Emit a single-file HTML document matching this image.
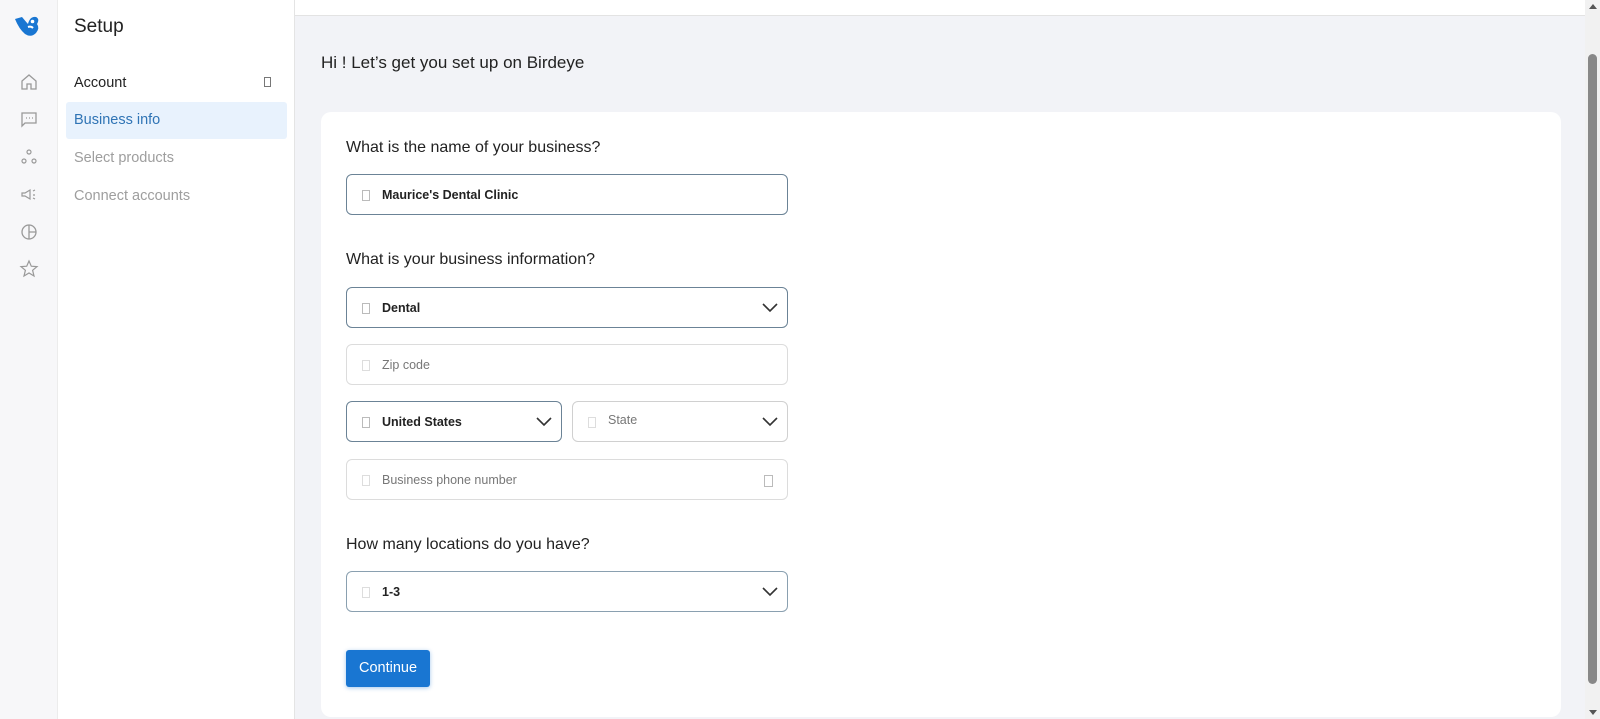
<!DOCTYPE html>
<html style="overflow:hidden;height:719px"><head><meta charset="utf-8"><style>
*{box-sizing:border-box;margin:0;padding:0}
body{width:1600px;height:719px;overflow:hidden;background:#f2f3f7;font-family:"Liberation Sans",Arial,sans-serif;position:relative;color:#212121}
.rail{position:absolute;left:0;top:0;width:58px;height:719px;background:#f7f7f9;border-right:1px solid #ececec}
.side{position:absolute;left:58px;top:0;width:237px;height:719px;background:#fff;border-right:1px solid #e4e4e4}
.top{position:absolute;left:295px;top:0;width:1290px;height:16px;background:#fff;border-bottom:1px solid #e3e3e3}
.ic{position:absolute;left:19px;width:20px;height:20px}
.abs{position:absolute}
.card{position:absolute;left:321px;top:112px;width:1240px;height:605px;background:#fff;border-radius:10px}
.q{position:absolute;left:346px;font-size:16px;color:#222}
.inp{position:absolute;height:41px;border:1px solid #6b8396;border-radius:6px;background:#fff;font-size:12.5px;font-weight:bold;color:#222}
.inp.ph{border-color:#dcdcdc;font-weight:normal;color:#777}
.inp .b{position:absolute;left:15px;top:15px;width:8px;height:11px;border:1px solid #bbb}
.inp .t{position:absolute;left:35px;top:13px}
.inp svg{position:absolute;right:9px;top:13px}
.sb{position:absolute;left:1585px;top:0;width:15px;height:719px;background:#f1f1f1}
</style></head><body>
<div class="rail">
<svg class="abs" style="left:14px;top:14px" width="26" height="24" viewBox="0 0 26 24"><path d="M1 5 L8 3 Q13 9 14 10 Q16 2 22 3 Q26 5 23 10 Q26 14 22 19 Q17 24 11 20 Q5 15 1 5Z" fill="#1976d2"/><path d="M14 13 Q17 12 19 14" stroke="#fff" stroke-width="2" fill="none"/><circle cx="18.5" cy="7.5" r="1.8" fill="#fff"/></svg>
<svg class="ic" style="top:72px" viewBox="0 0 20 20" fill="none" stroke="#999" stroke-width="1.3"><path d="M3 9 L10 3 L17 9 V17 H12 V12 H8 V17 H3Z"/></svg>
<svg class="ic" style="top:109px" viewBox="0 0 20 20" fill="none" stroke="#999" stroke-width="1.3"><path d="M3 4 H17 V14 H6 L3 17Z"/><path d="M7 9h1M10 9h1M13 9h1"/></svg>
<svg class="ic" style="top:147px" viewBox="0 0 20 20" fill="none" stroke="#999" stroke-width="1.2"><circle cx="10" cy="5" r="2"/><circle cx="5" cy="14" r="2"/><circle cx="15" cy="14" r="2"/></svg>
<svg class="ic" style="top:185px" viewBox="0 0 20 20" fill="none" stroke="#999" stroke-width="1.2"><path d="M3 8 H6 L11 5 V14 L6 11 H3Z"/><path d="M14 6l2-1M14 10h2M14 13l2 1"/></svg>
<svg class="ic" style="top:222px" viewBox="0 0 20 20" fill="none" stroke="#999" stroke-width="1.3"><circle cx="10" cy="10" r="7"/><path d="M10 3V10H17M10 10V17"/></svg>
<svg class="ic" style="top:259px" viewBox="0 0 20 20" fill="none" stroke="#999" stroke-width="1.2"><path d="M10 2 L12.3 7.2 L18 7.6 L13.6 11.3 L15 17 L10 14 L5 17 L6.4 11.3 L2 7.6 L7.7 7.2Z"/></svg>
</div>
<div class="side">
<div class="abs" style="left:16px;top:16px;font-size:19px;color:#222">Setup</div>
<div class="abs" style="left:16px;top:75px;font-size:14.5px;color:#222">Account</div>
<div class="abs" style="left:206px;top:77px;width:7px;height:10px;border:1px solid #777"></div>
<div class="abs" style="left:8px;top:102px;width:221px;height:37px;background:#e8f2fd;border-radius:3px"></div>
<div class="abs" style="left:16px;top:112px;font-size:14.5px;color:#2f74b5">Business info</div>
<div class="abs" style="left:16px;top:150px;font-size:14.5px;color:#9e9e9e">Select products</div>
<div class="abs" style="left:16px;top:188px;font-size:14.5px;color:#9e9e9e">Connect accounts</div>
</div>
<div class="top"></div>
<div class="abs" style="left:321px;top:53px;font-size:17px;color:#222">Hi ! Let’s get you set up on Birdeye</div>
<div class="card"></div>
<div class="q" style="top:139px">What is the name of your business?</div>
<div class="inp" style="left:346px;top:174px;width:442px"><span class="b"></span><span class="t">Maurice's Dental Clinic</span></div>
<div class="q" style="top:251px">What is your business information?</div>
<div class="inp" style="left:346px;top:287px;width:442px"><span class="b"></span><span class="t">Dental</span><svg width="16" height="12" viewBox="0 0 16 12"><path d="M1 3 L8 10 L15 3" fill="none" stroke="#333" stroke-width="1.6"/></svg></div>
<div class="inp ph" style="left:346px;top:344px;width:442px"><span class="b" style="border-color:#ddd"></span><span class="t">Zip code</span></div>
<div class="inp" style="left:346px;top:401px;width:216px"><span class="b"></span><span class="t">United States</span><svg width="16" height="12" viewBox="0 0 16 12"><path d="M1 3 L8 10 L15 3" fill="none" stroke="#333" stroke-width="1.6"/></svg></div>
<div class="inp ph" style="left:572px;top:401px;width:216px;border-color:#d0d0d0"><span class="b" style="border-color:#ddd"></span><span class="t" style="top:11px">State</span><svg width="16" height="12" viewBox="0 0 16 12"><path d="M1 3 L8 10 L15 3" fill="none" stroke="#333" stroke-width="1.6"/></svg></div>
<div class="inp ph" style="left:346px;top:459px;width:442px"><span class="b" style="border-color:#ddd"></span><span class="t">Business phone number</span><span class="b" style="left:auto;right:14px;border-color:#bbb;width:9px;height:12px"></span></div>
<div class="q" style="top:536px">How many locations do you have?</div>
<div class="inp" style="left:346px;top:571px;width:442px;border-color:#8aa0b0"><span class="b" style="border-color:#ddd"></span><span class="t">1-3</span><svg width="16" height="12" viewBox="0 0 16 12"><path d="M1 3 L8 10 L15 3" fill="none" stroke="#333" stroke-width="1.6"/></svg></div>
<div class="abs" style="left:346px;top:650px;width:84px;height:37px;background:#1976d2;border-radius:3px;color:#fff;font-size:14.5px;text-align:center;line-height:37px;box-shadow:0 1px 4px rgba(25,118,210,.4)">Continue</div>
<div class="sb"><div class="abs" style="left:4px;top:4px;width:0;height:0;border-left:4px solid transparent;border-right:4px solid transparent;border-bottom:5px solid #555"></div>
<div class="abs" style="left:3px;top:54px;width:9px;height:630px;background:#888;border-radius:5px"></div>
<div class="abs" style="left:4px;top:710px;width:0;height:0;border-left:4px solid transparent;border-right:4px solid transparent;border-top:5px solid #555"></div></div>
</body></html>
